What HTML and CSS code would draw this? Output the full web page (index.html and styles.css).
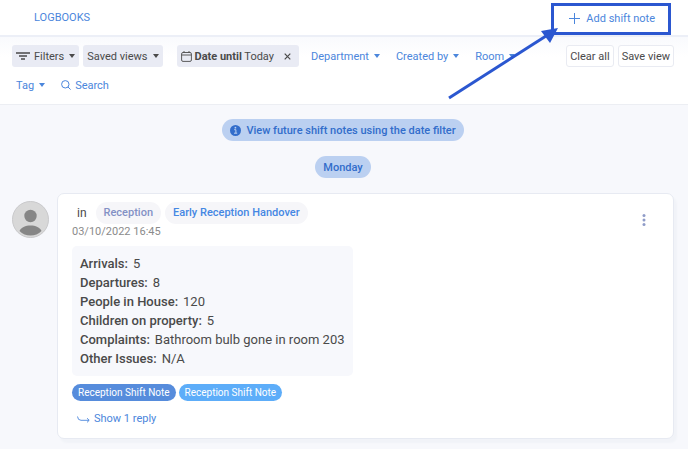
FILE: index.html
```html
<!DOCTYPE html>
<html lang="en">

<head>
  <meta charset="utf-8">
  <title>Logbooks</title>
  <link rel="stylesheet" href="styles.css">
</head>

<body>
  <header class="topbar">
    <a class="brand" href="#">LOGBOOKS</a>
    <div class="callout">
      <button class="add-btn">
        <svg width="11" height="11" viewBox="0 0 11 11"><path d="M5.5 0v11M0 5.5h11" stroke="currentColor" /></svg>
        Add shift note
      </button>
      <!-- arrow pointing at the add button -->
      <svg class="arrow" width="112" height="74" viewBox="0 0 112 74">
        <path d="M2 72L99 10" stroke="#2b57d0" stroke-width="3" />
        <path d="M111 2L94 5L103 17Z" fill="#2b57d0" />
      </svg>
    </div>
  </header>

  <section class="filterbar">
    <div class="filters">
      <div class="filter-group">
        <button class="filter filled">
          <svg class="lines" width="14" height="8" viewBox="0 0 14 8"><path d="M0 1h14M3 4h8M5 7h4" stroke="currentColor" stroke-width="1.3" /></svg>
          Filters <span class="caret"></span>
        </button>
        <button class="filter filled">Saved views <span class="caret"></span></button>
      </div>
      <button class="filter filled date">
        <svg width="11" height="11" viewBox="0 0 11 11"><path d="M2 1.5h7a1.4 1.4 0 0 1 1.4 1.4V9A1.4 1.4 0 0 1 9 10.4H2A1.4 1.4 0 0 1 .6 9V2.9A1.4 1.4 0 0 1 2 1.5zM.6 4h9.8M3 0v1.5M8 0v1.5" fill="none" stroke="currentColor" stroke-width=".9" /></svg>
        <span><b>Date until</b> Today</span>
        <svg class="close" width="7" height="7" viewBox="0 0 7 7"><path d="M.7.7l5.6 5.6M6.3.7L.7 6.3" stroke="currentColor" stroke-width="1.2" /></svg>
      </button>
      <button class="filter">Department <span class="caret"></span></button>
      <button class="filter">Created by <span class="caret"></span></button>
      <button class="filter">Room <span class="caret"></span></button>
      <button class="filter">Tag <span class="caret"></span></button>
      <button class="filter search">
        <svg width="10" height="10" viewBox="0 0 10 10"><path d="M6.9 6.9l2.7 2.7M8 4.3a3.7 3.7 0 1 1-7.4 0a3.7 3.7 0 0 1 7.4 0z" fill="none" stroke="currentColor" /></svg>
        Search
      </button>
    </div>
    <div class="actions">
      <button class="action">Clear all</button>
      <button class="action">Save view</button>
    </div>
  </section>

  <main>
    <div class="notice">
      <svg width="11" height="11" viewBox="0 0 11 11"><circle cx="5.5" cy="5.5" r="5.5" fill="currentColor" /><path d="M4.2 4.7h1.7v3.4M4 8.2h3.2" fill="none" stroke="#bbd0f1" /><circle cx="5.4" cy="2.7" r=".9" fill="#bbd0f1" /></svg>
      View future shift notes using the date filter
    </div>
    <div class="notice">Monday</div>

    <div class="entry">
      <svg class="avatar" width="37" height="37" viewBox="0 0 37 37">
        <circle cx="18.5" cy="18.5" r="18" fill="#d8d8d8" stroke="#c9c9cb" />
        <circle cx="18.5" cy="15" r="6.2" fill="#868686" />
        <path d="M7.5 30C10 22.500 27 22.500 29.500 30Q25 34.500 18.500 34.500T7.500 30z" fill="#868686" />
      </svg>
      <article class="card">
        <button class="menu" aria-label="More">
          <svg width="4" height="12" viewBox="0 0 4 12"><g fill="currentColor"><circle cx="2" cy="1.500" r="1.500" /><circle cx="2" cy="6" r="1.500" /><circle cx="2" cy="10.500" r="1.500" /></g></svg>
        </button>
        <div class="card-head">
          <span class="in">in</span>
          <a class="chip muted" href="#">Reception</a>
          <a class="chip" href="#">Early Reception Handover</a>
        </div>
        <time class="date-time">03/10/2022 16:45</time>
        <dl class="report">
          <div><dt>Arrivals:</dt><dd>5</dd></div>
          <div><dt>Departures:</dt><dd>8</dd></div>
          <div><dt>People in House:</dt><dd>120</dd></div>
          <div><dt>Children on property:</dt><dd>5</dd></div>
          <div><dt>Complaints:</dt><dd>Bathroom bulb gone in room 203</dd></div>
          <div><dt>Other Issues:</dt><dd>N/A</dd></div>
        </dl>
        <div class="tags">
          <span class="tag">Reception Shift Note</span>
          <span class="tag light">Reception Shift Note</span>
        </div>
        <button class="reply">
          <svg width="13" height="7" viewBox="0 0 13 7"><path d="M.5 .5Q.8 4.300 4 4.300H12M10 2.200L12.200 4.300L10 6.400" fill="none" stroke="currentColor" stroke-width=".9" /></svg>
          Show 1 reply
        </button>
      </article>
    </div>
  </main>
</body>

</html>
```
FILE: styles.css
```css
* {
  box-sizing: border-box;
}

body {
  margin: 0;
  font-family: Roboto, sans-serif;
  font-size: 11px;
  color: #4a4a4a;
  background-color: #f7f8fc;
}

button {
  padding: 0;
  border: none;
  background: none;
  font: inherit;
  color: inherit;
  white-space: nowrap;
  cursor: pointer;
}

a {
  color: inherit;
  text-decoration: none;
}

svg {
  flex: none;
}

.topbar {
  display: flex;
  justify-content: space-between;
  align-items: center;
  height: 37px;
  padding: 0 17px 0 34px;
  background-color: white;
  border-bottom: 2px solid #eceff7;
}

.brand,
.add-btn {
  color: #4b86dc;
}

/* Highlighted button */
.callout {
  position: relative;
  align-self: flex-end;
  border: 3px solid #2b57d0;
}

.add-btn {
  display: flex;
  align-items: center;
  gap: 6px;
  height: 26px;
  padding: 0 13px 2px 15px;
}

.arrow {
  position: absolute;
  right: 109px;
  top: 20px;
  z-index: 1;
  pointer-events: none;
}

/* Filters */
.filterbar {
  display: flex;
  align-items: flex-start;
  gap: 8px;
  padding: 8px 14px 8px 12px;
  background: linear-gradient(#f9fafd, white 20px);
  border-bottom: 1px solid #eceef3;
}

.filters {
  flex: 1;
  display: flex;
  flex-wrap: wrap;
  gap: 7px 8px;
}

.filter-group {
  display: flex;
  gap: 4px;
  margin-right: 6px;
}

.filter {
  display: flex;
  align-items: center;
  gap: 4px;
  height: 22px;
  padding: 0 4px;
  border-radius: 3px;
  color: #4b86dc;
}

.filled {
  background-color: #e9ebf4;
  color: #4a4a4a;
}

.date {
  gap: 3px;
}

.close {
  margin: 0 4px 0 7px;
}

.caret {
  margin-left: 1px;
  border: 3px solid transparent;
  border-top: 4px solid currentColor;
  border-bottom: none;
}

.actions {
  display: flex;
  gap: 4px;
}

.action {
  height: 22px;
  padding: 0 3px;
  border: 1px solid #e9ebf2;
  border-radius: 3px;
  background-color: white;
}

/* Feed */
main {
  display: flex;
  flex-direction: column;
  align-items: center;
  gap: 15px;
  padding: 14px 14px 11px 12px;
}

.notice {
  display: flex;
  align-items: center;
  gap: 5px;
  height: 22px;
  padding: 0 8px;
  border-radius: 11px;
  background-color: #bbd0f1;
  color: #326dcb;
  font-weight: 500;
}

.entry {
  display: flex;
  align-items: flex-start;
  gap: 8px;
  width: 100%;
}

.avatar {
  margin-top: 8px;
}

.card {
  position: relative;
  flex: 1;
  padding: 8px 14px 11px;
  background-color: white;
  border: 1px solid #e7eaf2;
  border-radius: 7px;
  box-shadow: 3px 4px 2px #f1f3f8;
}

.menu {
  position: absolute;
  top: 20px;
  right: 27px;
  height: 12px;
  line-height: 0;
  color: #8f9cc8;
}

.card-head {
  display: flex;
  align-items: center;
  gap: 4px;
}

.in {
  margin: 0 5px;
  font-size: 12px;
}

.chip {
  padding: 0 8px;
  border-radius: 11px;
  background-color: #f6f6f9;
  color: #4587e3;
  font-weight: 500;
  line-height: 22px;
}

.muted {
  color: #8391c5;
}

.date-time {
  display: block;
  line-height: 16px;
  color: #8b8b8b;
}

.report {
  width: fit-content;
  margin: 6px 0 8px;
  padding: 8px;
  border-radius: 5px;
  background-color: #f7f8fc;
  font-size: 13px;
  line-height: 19px;
}

.report div {
  display: flex;
  gap: 5px;
}

.report dt {
  font-weight: 500;
}

.report dd {
  margin: 0;
}

.tags {
  display: flex;
  gap: 3px;
}

.tag {
  padding: 0 6px;
  border-radius: 9px;
  background-color: #568cdc;
  color: white;
  font-size: 10px;
  line-height: 17px;
}

.light {
  background-color: #5dadf9;
}

.reply {
  display: flex;
  align-items: center;
  gap: 4px;
  margin: 10px 0 0 5px;
  line-height: 16px;
  color: #4b86dc;
}
```
